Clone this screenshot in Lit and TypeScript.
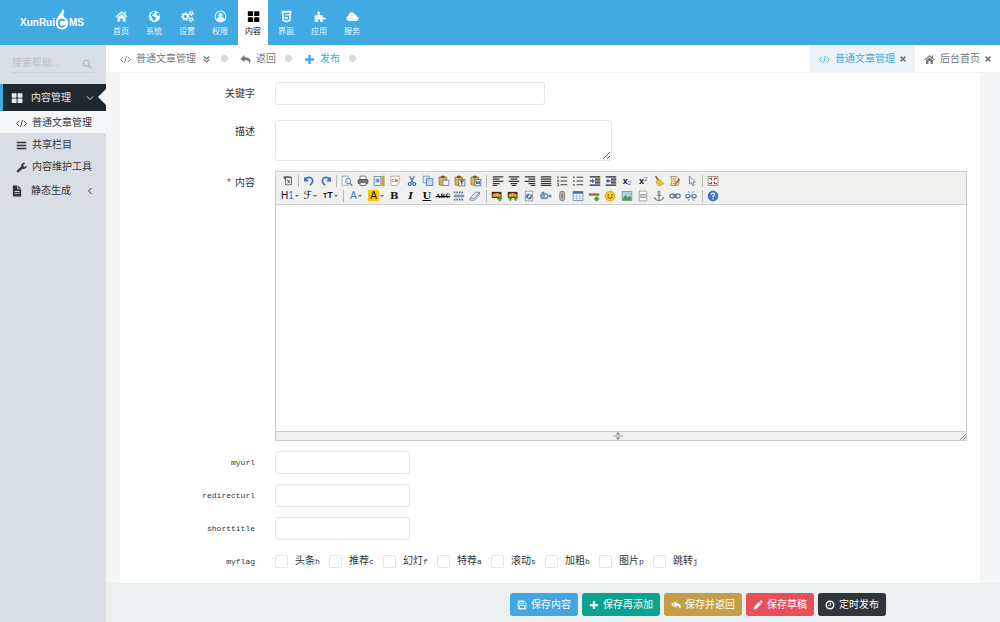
import { LitElement, html, svg, css, SVGTemplateResult } from "lit";
import { customElement, property, state } from "lit/decorators.js";
import { classMap } from "lit/directives/class-map.js";

const line = (d: string, color = "currentColor", w = 1.5) =>
  svg`<path d=${d} fill="none" stroke=${color} stroke-width=${w} />`;
const fill = (d: string, color = "currentColor") =>
  svg`<path d=${d} fill=${color} fill-rule="evenodd" />`;

const gear = (cx: number, cy: number, r: number, w: number, dash: string) => svg`
  <circle cx=${cx} cy=${cy} r=${r} fill="none" stroke="currentColor" stroke-width=${w} />
  <circle cx=${cx} cy=${cy} r=${r + w / 2 + 0.4} fill="none" stroke="currentColor" stroke-width="1.4" stroke-dasharray=${dash} />`;

const page = (x = 3, y = 1.5, w = 9, h = 12, stroke = "#8a93a0") =>
  svg`<rect x=${x} y=${y} width=${w} height=${h} fill="#fff" stroke=${stroke} />`;

const clipboard = svg`
  <rect x="1.5" y="2.5" width="10" height="11" rx="1" fill="#e3b341" stroke="#7d6a34" />
  <rect x="4" y="1" width="5" height="3" rx="1" fill="#5c5c50" />`;

const photo = svg`
  <rect x="1" y="2.5" width="13" height="8" fill="#3a2c14" />
  <path d="M2 6q6-4 11 0v3H2z" fill="#f0a41c" />`;

const icons: Record<string, SVGTemplateResult> = {
  home: fill("M8 1.5 0.5 8l1 1.1L8 3.6l6.5 5.5 1-1.1-2.3-2V2.3h-2v2zM3 9l5-4.2L13 9v5.5H9.6v-4H6.4v4H3z"),
  globe: svg`<circle cx="8" cy="8" r="7" fill="currentColor" />
    <path class="cut" d="M5.5 2.2 9 1.8l-.6 1.6-1.6.5.2 1.4-1.7.4-.3 1.6 1.8.2 1.6 1.4 1.6.6-.6 1.8-1.6 1.4-.8 1.3-.8-2.6-1.6-1.8-.2-1.8-1.6-1.6zM10.5 4l2.2-.6 1.5 2.6-.8 1.6-1.5-.4-1.3-1.3z" />`,
  cogs: svg`${gear(5.4, 8, 3, 2.4, "2.1 2")}${gear(12.6, 4, 1.6, 1.3, "1.5 1.4")}${gear(12.6, 12, 1.6, 1.3, "1.5 1.4")}`,
  user: svg`<circle cx="8" cy="8" r="6.6" fill="none" stroke="currentColor" stroke-width="1.3" />
    <circle cx="8" cy="6.3" r="2.7" fill="currentColor" /><path d="M3 12.2q.6-3.4 3-3.6 2 1.2 4 0 2.4.2 3 3.6Q8 16.5 3 12.2z" fill="currentColor" />`,
  grid: svg`<rect x="1" y="1.5" width="6.400" height="6" rx=".8" fill="currentColor" /><rect x="8.800" y="1.5" width="6.400" height="6" rx=".8" fill="currentColor" />
    <rect x="1" y="8.8" width="6.400" height="6" rx=".8" fill="currentColor" /><rect x="8.800" y="8.8" width="6.400" height="6" rx=".8" fill="currentColor" />`,
  html5: fill("M1.8 1h12.4L13 13.5 8 15.5 3 13.5zM4.3 3.5l.5 5h5l-.2 2.2-1.6.5-1.6-.5-.1-1H4.7l.2 2.3L8 13l3.100-1 .5-5.200H6.300l-.1-1.600h5.500l.1-1.700z"),
  puzzle: fill("M2 6.5h3.6q.6-.8-.1-1.8Q4.5 2 6.8 1.6 9.5 2 8.5 4.7q-.7 1 0 1.8H12v2.6q.9.7 1.6.1 2-.5 2.1 1.3-.3 1.9-2.1 1.3-.8-.7-1.6 0v3H8.7q-.4-.8.1-1.400.3-1.500-1.400-1.600-1.900.2-1.300 1.700.4.700 0 1.300H2z"),
  cloud: fill("M4 13.500Q.5 13.300.4 10.300.6 7.800 3 7.200 3.200 3 7.300 2.700q3 .1 4 3Q14 6 14 8.400q1.700.7 1.700 2.500-.3 2.500-3 2.600z"),
  code: line("M4.500 4 1 8l3.500 4M11.500 4 15 8l-3.500 4M9.300 3 6.700 13", "currentColor", 1.3),
  down2: line("M4 3.500 8 7l4-3.500M4 8l4 3.500L12 8", "currentColor", 2),
  back: fill("M6.500 1.500v3.200q7.500-.2 8.800 4.800.3 2.500-1.600 5 .4-5.700-7.200-5.600v3.300L.7 6.900z"),
  backAll: fill("M5.500 2v2L2.800 7l2.700 3v2.200L.4 7zM9 2v3q6 .4 6.500 5 0 2.500-1.600 4.500Q14.500 9.300 9 9v3.200L3.900 7z"),
  plus: fill("M6.200 1.500h3.600v4.700h4.700v3.600H9.800v4.700H6.200V9.800H1.500V6.200h4.700z"),
  close: fill("M4.300 2 8 5.700 11.700 2 14 4.300 10.300 8l3.700 3.700-2.300 2.300L8 10.300 4.300 14 2 11.700 5.700 8 2 4.300z"),
  search: svg`<circle cx="6.8" cy="6.8" r="4.8" fill="none" stroke="currentColor" stroke-width="1.8" />${line("M10.300 10.300 15 15", "currentColor", 2.2)}`,
  chevDown: line("M2 5l6 6 6-6", "currentColor", 2),
  chevLeft: line("M11 2 5 8l6 6", "currentColor", 2),
  bars: line("M1 3.500h14M1 8h14M1 12.500h14", "currentColor", 2.2),
  wrench: fill("M1.200 12.800 7.500 6.500Q7 2.500 11 1.200q1.500-.3 2.700.4L10.800 4v2l2 1.200L15.500 5q.3 4.500-4.500 5-.8.100-1.500-.2L3.500 15Q.5 15.500 1.200 12.800z"),
  file: fill("M2.500.8h6v5h5v9.500h-11zM9.700.8l3.800 3.700H9.700zM4.800 8v1.200h6.400V8zm0 2.600v1.200h6.400v-1.200z"),
  save: svg`<path d="M1.8 1.8h9.700l2.700 2.700v9.700H1.800z" fill="none" stroke="currentColor" stroke-width="1.5" /><path d="M4 2h6v4H4zM4 9h8v5H4z" fill="none" stroke="currentColor" stroke-width="1.4" />`,
  pencil: fill("M1 15l.8-4.200L9.500 3 13 6.500l-7.800 7.700zM10.500 2 12 .7q.8-.4 1.500.2L15.200 2.600q.5.800 0 1.500L14 5.400z"),
  clock: svg`<circle cx="8" cy="8" r="6" fill="none" stroke="currentColor" stroke-width="2.2" />${line("M8.500 4.500v4H5.500", "currentColor", 1.6)}`,

  source: svg`${page(4.5, 3, 8, 10, "#444")}${line("M2 2.500h8q2 0 1.500 2M3 3v2h2M6.500 6l4 5M10.500 6l-3 5", "#444", 1.3)}`,
  undo: line("M2.500 3v4.500H7M3 7q2-4.500 6.500-3.700 4.500 1.700 3 6.200-1 2.500-3.500 4", "#3b6fc4", 2.2),
  redo: line("M13.500 3v4.500H9M13 7q-2-4.500-6.500-3.700-4.500 1.700-3 6.200 1 2.500 3.500 4", "#3b6fc4", 2.2),
  preview: svg`${page(1.5, 1.5, 8, 12)}<circle cx="9.5" cy="8" r="3.5" fill="#dcebf8" stroke="#6d88a8" stroke-width="1.3" />${line("M12 11l3 3.500", "#8a7350", 2)}`,
  print: svg`<path d="M4 1.5h8V6H4z" fill="#fff" stroke="#555" /><rect x="1.5" y="6" width="13" height="5.5" rx="1" fill="#777" stroke="#444" /><path d="M4 10h8v4H4z" fill="#eee" stroke="#555" />`,
  template: svg`<rect x="1.5" y="2" width="9" height="12" fill="#e9f1fb" stroke="#55779f" /><path d="M3.5 5h5v5h-5z" fill="#6d9bd0" /><path d="M12 1.5h3v13h-3z" fill="#dfa62f" stroke="#9a7423" stroke-width=".6" />`,
  codeDoc: svg`<path d="M2.5 1.5h11v9l-3 3.5h-8z" fill="#fff" stroke="#999" />${line("M7 5.500Q4 5 4 7.500 4.300 9.500 7 9M9 5v4.500M8 7.500h4M11 5.500v4", "#c4762c", 1.3)}`,
  cut: svg`${line("M5 1.500 9.500 10M11 1.500 6.500 10", "#4571b8", 1.6)}<circle cx="5" cy="12" r="2" fill="none" stroke="#2e5ca8" stroke-width="1.6" /><circle cx="11" cy="12" r="2" fill="none" stroke="#2e5ca8" stroke-width="1.6" />`,
  copy: svg`<rect x="1.5" y="1.5" width="8" height="9" fill="#dce9fa" stroke="#6288bd" /><rect x="6" y="5" width="8.5" height="9" fill="#c1d8f5" stroke="#4772b0" />`,
  paste: svg`${clipboard}<rect x="6.5" y="7" width="8" height="7" fill="#fff" stroke="#5475a3" />`,
  pasteText: svg`${clipboard}<rect x="6.5" y="6" width="8" height="8.5" fill="#fff" stroke="#54606f" />${line("M8 8h5M10.500 8v5", "#222", 1.4)}`,
  pasteWord: svg`${clipboard}<rect x="6.5" y="6" width="8" height="8.5" fill="#dbe8fb" stroke="#3a66b0" />${line("M8 8l1 4 1.500-3L12 12l1-4", "#2858ad", 1.3)}`,
  left: line("M1 2.500h14M1 5.500h9M1 8.500h14M1 11.500h9M1 14h6", "#333", 1.5),
  center: line("M1 2.500h14M3.500 5.500h9M1 8.500h14M3.500 11.500h9M5 14h6", "#333", 1.5),
  right: line("M1 2.500h14M6 5.500h9M1 8.500h14M6 11.500h9M9 14h6", "#333", 1.5),
  full: line("M1 2.500h14M1 5.500h14M1 8.500h14M1 11.500h14M1 14h14", "#333", 1.5),
  ol: svg`${line("M6 3h9M6 8h9M6 13h9", "#444", 1.4)}${line("M2.500 1v4M1.500 7h2v2h-2M1.500 11.500h2v3h-2", "#444", 1.1)}`,
  ul: svg`${line("M6 3h9M6 8h9M6 13h9", "#444", 1.4)}${line("M1.500 3h2M1.500 8h2M1.500 13h2", "#444", 2)}`,
  indent: svg`${line("M1 2.500h14M8 5.500h7M8 8h7M8 10.500h7M1 13.500h14", "#222", 1.5)}${fill("M1 7h3V5l3.500 3L4 11V9H1z", "#2c5cb0")}`,
  outdent: svg`${line("M1 2.500h14M8 5.500h7M8 8h7M8 10.500h7M1 13.500h14", "#222", 1.5)}${fill("M7.500 7h-3V5L1 8l3.500 3V9h3z", "#2c5cb0")}`,
  broom: svg`${line("M3.500 1.500 7 7", "#b3541c", 2.2)}<path d="M4.5 8 9 6l5.5 5.5L8 14.500q-3.500-2-3.500-6.500z" fill="#f2c230" stroke="#b78913" stroke-width=".8" />`,
  format: svg`<path d="M2 2h8l4 5-2 7H2l2-6z" fill="#f7e9b5" stroke="#9a7c44" />${line("M5 5h4M6 8h4M5 11h4", "#777", 1)}${line("M14 5 8 13", "#bb6a2f", 2)}`,
  select: svg`<path d="M4.5 1.5v10.500l2.500-2.200L9 14l1.800-.8L9 9.300h3.500z" fill="#fff" stroke="#58799f" stroke-width="1.2" />`,
  fullscreen: svg`<rect x="1.5" y="2" width="13" height="12" fill="#fff" stroke="#777" />${line("M3 4.500h3v2.500M13 4.500h-3v2.500M3 11.500h3V9M13 11.500h-3V9", "#c22f2f", 1.6)}`,
  lineHeight: svg`${line("M1 8h14", "#333", 1.3)}${line("M1 3h2M4.500 3h2M8 3h2M11.500 3h2", "#41618f", 2)}${line("M1 13h2M4.500 13h2M8 13h2M11.500 13h2", "#41618f", 2)}${line("M4 4v2.500M8 4v2.500M12 4v2.500M4 9.500v2.500M8 9.500v2.500M12 9.500v2.500", "#41618f", 1)}`,
  eraser: svg`<path d="M1.5 11 8.500 3h5.500l-6.500 8zM1.500 11v2.500h6L14 6V3" fill="#f4f7fb" stroke="#6780a5" stroke-width="1.2" />`,
  image: svg`${photo}${fill("M8 10.500h2.500V8.500H13v2h2v2h-2v2.500h-2.500v-2.500H8z", "#3f9a35")}`,
  images: svg`${photo}${fill("M2 11h1.600V9.500h1.800V11H7v1.800H5.400v1.700H3.600v-1.700H2zM9 11h1.600V9.500h1.800V11H14v1.800h-1.600v1.700h-1.800v-1.700H9z", "#3f9a35")}`,
  flash: svg`${page(3, 1.5, 10, 13, "#77808d")}<circle cx="8" cy="8.5" r="4" fill="#49709b" />${line("M10.500 5.500q-2.500 0-2.500 3-.5 3-2.500 3M7 8.500h3", "#fff", 1.2)}`,
  media: svg`<rect x="1" y="5" width="9" height="6.500" rx="1.5" fill="#8fa9c7" stroke="#4b6787" /><path d="M10 8l5-2.500v5z" fill="#62809f" /><circle cx="4" cy="4" r="2" fill="#6e8bac" /><circle cx="8" cy="8" r="1.5" fill="#fff" />`,
  attach: svg`<rect x="5" y="1.5" width="6.500" height="13" rx="3.200" fill="#bbb" stroke="#777" stroke-width="1.2" />${line("M8.200 4.500v7", "#666", 1.4)}`,
  table: svg`<rect x="1.5" y="2" width="13" height="12" fill="#fff" stroke="#4a78ba" /><path d="M1.5 2h13v3h-13z" fill="#3d6db5" />${line("M1.500 8h13M1.500 11h13M6 5v9M10.500 5v9", "#9db8dc", 1)}`,
  hr: svg`<path d="M1 4.500h14v3H1z" fill="#8b6c43" /><path d="M8 10.500h2V8.500h3v2h2v2h-2v2.500h-3v-2.500H8z" fill="#3f9a35" />`,
  smile: svg`<circle cx="8" cy="8" r="6.500" fill="#ffc928" stroke="#d99a15" /><circle cx="5.7" cy="6.5" r="1" fill="#5d3a0a" /><circle cx="10.300" cy="6.500" r="1" fill="#5d3a0a" />${line("M4.500 9.500q3.500 3.500 7 0", "#5d3a0a", 1.2)}`,
  map: svg`<rect x="1.5" y="2" width="13" height="12" fill="#a8d3ef" stroke="#808f80" /><path d="M2 11l4-4 3 3 2.500-2 2.500 2v3.500H2z" fill="#4f9b47" />`,
  pagebreak: svg`<path d="M3 1.500h10V6H3zM3 10h10v4.500H3z" fill="#fff" stroke="#888" />${line("M1 8h14", "#999", 1.2)}`,
  anchor: svg`<circle cx="8" cy="3" r="1.6" fill="none" stroke="#6a7684" stroke-width="1.3" />${line("M8 4.500v9.500M5 7h6M2 9.500q1 4.500 6 4.500t6-4.500", "#6a7684", 1.5)}`,
  link: svg`<rect x="1" y="5.5" width="7" height="5" rx="2.5" fill="none" stroke="#54708f" stroke-width="1.6" /><rect x="8" y="5.5" width="7" height="5" rx="2.5" fill="none" stroke="#54708f" stroke-width="1.6" />${line("M5 8h6", "#54708f", 1.5)}`,
  unlink: svg`<rect x="1" y="6" width="5.500" height="4.500" rx="2.200" fill="none" stroke="#54708f" stroke-width="1.5" /><rect x="9.500" y="6" width="5.500" height="4.500" rx="2.200" fill="none" stroke="#54708f" stroke-width="1.5" />${line("M4 1.500 6 4M12 1.500 10 4M4 14.500 6 12M12 14.500 10 12M8 6v4", "#54708f", 1.2)}`,
  help: svg`<circle cx="8" cy="8" r="6.500" fill="#3e78d2" stroke="#2b569e" />${line("M5.700 6Q6 4 8 4q2.400.3 2.200 2.200Q9.700 7.600 8 8.200V9.700M8 11v1.600", "#fff", 1.6)}`,
};

const icon = (name: string) => html`<svg class="icon" viewBox="0 0 16 16" aria-hidden="true">${icons[name]}</svg>`;

const NAV = [
  ["home", "首页"], ["globe", "系统"], ["cogs", "设置"], ["user", "权限"],
  ["grid", "内容"], ["html5", "界面"], ["puzzle", "应用"], ["cloud", "服务"],
];

const TOOLS_TOP = [
  "source", "|", "undo", "redo", "|", "preview", "print", "template", "codeDoc", "cut", "copy", "paste",
  "pasteText", "pasteWord", "|", "left", "center", "right", "full", "ol", "ul", "indent", "outdent",
  "sub", "sup", "broom", "format", "select", "|", "fullscreen",
];
const TOOLS_BOTTOM = [
  "heading", "fontFamily", "fontSize", "|", "color", "highlight", "bold", "italic", "underline", "strike",
  "lineHeight", "eraser", "|", "image", "images", "flash", "media", "attach", "table", "hr", "smile",
  "map", "pagebreak", "anchor", "link", "unlink", "|", "help",
];
const GLYPHS: Record<string, unknown> = {
  heading: html`<span class="h">H<b class="blue">1</b></span>`,
  fontFamily: html`<span class="script">ℱ</span>`,
  fontSize: html`<span class="tt"><small>T</small>T</span>`,
  color: html`<span class="h blue">A</span>`,
  highlight: html`<span class="h mark">A</span>`,
  bold: html`<b class="serif">B</b>`,
  italic: html`<b class="serif it">I</b>`,
  underline: html`<b class="serif un">U</b>`,
  strike: html`<s class="abc">ABC</s>`,
  sub: html`<span class="x low">x<i>2</i></span>`,
  sup: html`<span class="x">x<i>2</i></span>`,
};
const MENUS = new Set(["heading", "fontFamily", "fontSize", "color", "highlight"]);

const FLAGS = [
  ["头条", "h"], ["推荐", "c"], ["幻灯", "f"], ["特荐", "a"],
  ["滚动", "s"], ["加粗", "b"], ["图片", "p"], ["跳转", "j"],
];

const base = css`
  :host { display: block; }
  * { box-sizing: border-box; }
  a { color: inherit; text-decoration: none; }
  button { font: inherit; color: inherit; border: 0; background: none; padding: 0; cursor: pointer; }
  .icon { display: block; flex: none; width: 12px; height: 12px; }
`;

@customElement("rich-editor")
export class RichEditor extends LitElement {
  static styles = [base, css`
    .editor { border: 1px solid #ccc; background: #fff; }
    .bar { background: #f0f0ee; border-bottom: 1px solid #ccc; padding: 1px 5px; }
    .row { display: flex; align-items: center; justify-content: space-between; height: 15px; max-width: 439px; }
    .tool { flex: none; width: 14px; height: 14px; display: flex; align-items: center; justify-content: center; color: #111; font: 10px/14px "Liberation Sans", sans-serif; }
    .menu { width: 18px; }
    .caret { border: 2px solid transparent; border-top-color: #666; border-bottom: 0; margin-left: 1px; flex: none; }
    .sep { flex: none; width: 1px; height: 12px; margin: 0 1px; background: #b5b5b5; }
    .blue { color: #3b7ad8; font-weight: 400; }
    .mark { background: #ffc400; width: 11px; line-height: 11px; border-radius: 1px; }
    .script { font: 11px/14px "DejaVu Serif", "DejaVu Sans", serif; }
    .tt { font: bold 9px/14px "Liberation Sans", sans-serif; }
    .tt small { font-size: 7px; }
    .serif { font: bold 10px/11px "DejaVu Serif", serif; }
    .it { font-style: italic; }
    .un { text-decoration: underline; }
    .abc { font: bold 6px/10px "DejaVu Serif", serif; }
    .x { display: flex; align-items: flex-start; font: bold 9px/10px "Liberation Sans", sans-serif; }
    .x i { font: 6px/6px "Liberation Sans", sans-serif; color: #2c5cb0; }
    .low { align-items: flex-end; }
    .body { min-height: 226px; outline: none; }
    .status { display: flex; align-items: center; height: 9px; border-top: 1px solid #ccc; background: #f0f0ee; }
    .grip { flex: none; width: 10px; height: 8px; margin-left: auto; }
    .corner { flex: none; width: 7px; height: 7px; margin-left: auto; }
  `];

  private tool(name: string) {
    if (name === "|") return html`<span class="sep"></span>`;
    return html`<button type="button" class=${classMap({ tool: true, menu: MENUS.has(name) })} aria-label=${name}>
      ${GLYPHS[name] ?? icon(name)}${MENUS.has(name) ? html`<i class="caret"></i>` : ""}
    </button>`;
  }

  render() {
    return html`<div class="editor">
      <div class="bar" role="toolbar">
        <div class="row">${TOOLS_TOP.map((t) => this.tool(t))}</div>
        <div class="row">${TOOLS_BOTTOM.map((t) => this.tool(t))}</div>
      </div>
      <div class="body" contenteditable="true" role="textbox" aria-multiline="true" aria-label="内容"></div>
      <div class="status">
        <svg class="grip" viewBox="0 0 10 8"><path d="M0 4h10" stroke="#999" /><path d="M5 0l2 2.500H3zM5 8l2-2.500H3z" fill="#777" /></svg>
        <svg class="corner" viewBox="0 0 7 7"><path d="M1 7l6-6M4 7l3-3" stroke="#888" /></svg>
      </div>
    </div>`;
  }
}

@customElement("form-row")
export class FormRow extends LitElement {
  @property() name = "";
  static styles = [base, css`
    .row { display: grid; grid-template-columns: 135px minmax(0, 1fr); column-gap: 20px; }
    .name { text-align: right; padding-top: 1px; line-height: 22px; }
    ::slotted([slot="label"]) { display: block; }
  `];
  render() {
    return html`<div class="row"><div class="name"><slot name="label"></slot></div><div><slot></slot></div></div>`;
  }
}

@customElement("app-root")
export class AppRoot extends LitElement {
  @state() private flags = new Set<string>();

  static styles = [base, css`
    :host { font: 10px/14px "Liberation Sans", "Noto Sans CJK SC", sans-serif; color: #333; }
    .app { display: flex; flex-direction: column; min-height: 100vh; background: #f4f5f7; }

    .top { display: flex; height: 45px; background: #41aae3; color: #fff; }
    .logo { flex: none; width: 106px; padding-left: 20px; display: flex; align-items: center; font: bold 10px/14px "Liberation Sans", sans-serif; }
    .flame { flex: none; width: 14px; height: 21px; margin-top: -6px; }
    .nav { display: flex; gap: 3px; }
    .nav a { width: 30px; padding-top: 10px; display: flex; flex-direction: column; align-items: center; gap: 3px; font-size: 8px; line-height: 12px; color: #e9f6fd; }
    .nav .icon { width: 13px; height: 13px; }
    .nav .on { background: #fff; color: #000; }
    .cut { fill: #41aae3; }

    .mid { flex: 1; display: flex; }
    .side { flex: none; width: 106px; background: #d9dee5; }
    .search { display: flex; align-items: center; height: 28px; margin: 0 11px 11px 12px; border-bottom: 1px solid #cbd1d8; color: #b4bac2; }
    .search input { flex: 1; min-width: 0; border: 0; background: none; outline: none; padding: 8px 0 0; font: inherit; }
    .search input::placeholder { color: #bcc2c9; opacity: 1; }
    .search button { padding: 10px 3px 0 0; }
    .search .icon { width: 10px; height: 10px; }
    .item { display: flex; align-items: center; height: 26px; padding: 2px 0 0 11px; }
    .item .icon { width: 12px; height: 12px; margin-right: 8px; }
    .item .arrow { width: 8px; height: 8px; margin: 0 12px 0 auto; }
    .open { position: relative; height: 27px; background: #21282e; color: #e8ebee; border-left: 3px solid #41aae3; padding: 0 0 0 8px; }
    .open::after { content: ""; position: absolute; right: 0; top: 5px; border: 8px solid transparent; border-left-width: 0; border-right-color: #f4f5f7; }
    .sub { display: flex; align-items: center; height: 22px; padding: 2px 0 0 16px; }
    .sub .icon { width: 11px; height: 11px; margin-right: 5px; }
    .sub.on { background: #f6f7f9; }

    .main { flex: 1; min-width: 0; display: flex; flex-direction: column; }
    .crumbs { display: flex; align-items: center; height: 28px; padding-left: 14px; background: #fff; border-bottom: 1px solid #eff1f3; color: #777; }
    .crumbs a, .crumbs button { display: flex; align-items: center; gap: 5px; padding-top: 1px; }
    .crumbs .icon { width: 11px; height: 11px; }
    .crumbs .x .icon { width: 8px; height: 8px; }
    .dot { flex: none; width: 7px; height: 7px; border-radius: 50%; background: #dadada; margin: 0 12px 0 9px; }
    .accent { color: #41aae3; }
    .tabs { display: flex; align-self: stretch; margin-left: auto; }
    .tab { display: flex; align-items: center; gap: 4px; padding: 0 8px 0 9px; }
    .tab.on { background: #edf2f6; }
    .tab .x { color: #777; }

    .form { margin: 0 20px 0 14px; padding: 9px 13px 10px 0; background: #fff; display: flex; flex-direction: column; gap: 10px; }
    .keywords { margin-bottom: 5px; }
    .text { display: block; width: 100%; height: 23px; border: 1px solid #e4e6e9; border-radius: 3px; background: #fff; font: inherit; padding: 0 6px; }
    .w1 { max-width: 270px; }
    .w2 { max-width: 337px; height: 41px; resize: both; }
    .w3 { max-width: 135px; }
    .mono, .code { font-family: "Liberation Mono", monospace; font-size: 8px; }
    .need { color: #e02222; margin-right: 4px; }
    .flags { display: flex; flex-wrap: wrap; height: 23px; align-items: center; }
    .flag { display: flex; align-items: center; width: 54px; white-space: nowrap; }
    .flag input { appearance: none; flex: none; width: 13px; height: 13px; margin: 0 7px 0 0; border: 1px solid #e2e4e7; border-radius: 2px; background: #fff; }
    .flag input:checked { background: #41aae3; }

    .foot { display: flex; justify-content: flex-end; gap: 4px; margin-top: auto; padding: 10px 114px 6px 14px; background: #ebefef; }
    .btn { display: flex; align-items: center; gap: 4px; height: 23px; padding: 0 7px; border-radius: 3px; color: #fff; white-space: nowrap; }
    .btn .icon { width: 10px; height: 10px; }
    .b1 { background: #41a6e1; }
    .b2 { background: #0aa38f; }
    .b3 { background: #c49f47; }
    .b4 { background: #e7505a; }
    .b5 { background: #2f353b; }
  `];

  private toggle(code: string) {
    const next = new Set(this.flags);
    next.has(code) ? next.delete(code) : next.add(code);
    this.flags = next;
  }

  render() {
    return html`<div class="app">
      <header class="top">
        <a class="logo" href="#">XunRui<svg class="flame" viewBox="0 0 14 22" aria-label="C">
          <path d="M7.500 0Q7 3 4.500 6 .5 10 .5 15q.5 6 6.500 6.500 6-.5 6.500-6.500 0-4-3.500-6Q7 7 9.500 3 9 1 7.500 0z" fill="#fff" />
          <path d="M9.800 12.800Q8.800 11 7 11q-3.200.3-3.400 3.800.2 3.600 3.400 3.900 2-.1 2.900-2.100" fill="none" stroke="#41aae3" stroke-width="1.9" />
        </svg>MS</a>
        <nav class="nav">
          ${NAV.map(([i, t]) => html`<a href="#" class=${classMap({ on: t === "内容" })}>${icon(i)}<span>${t}</span></a>`)}
        </nav>
      </header>
      <div class="mid">
        <aside class="side">
          <div class="search"><input type="text" placeholder="搜索帮助..." aria-label="搜索帮助" /><button type="button" aria-label="搜索">${icon("search")}</button></div>
          <a class="item open" href="#">${icon("grid")}内容管理<svg class="icon arrow" viewBox="0 0 16 16">${icons.chevDown}</svg></a>
          <a class="sub on" href="#">${icon("code")}普通文章管理</a>
          <a class="sub" href="#">${icon("bars")}共享栏目</a>
          <a class="sub" href="#">${icon("wrench")}内容维护工具</a>
          <a class="item" href="#">${icon("file")}静态生成<svg class="icon arrow" viewBox="0 0 16 16">${icons.chevLeft}</svg></a>
        </aside>
        <div class="main">
          <div class="crumbs">
            <a href="#">${icon("code")}普通文章管理 ${icon("down2")}</a><i class="dot"></i>
            <a href="#">${icon("back")}返回</a><i class="dot"></i>
            <a class="accent" href="#">${icon("plus")}发布</a><i class="dot"></i>
            <div class="tabs">
              <div class="tab on"><a class="accent" href="#">${icon("code")}普通文章管理</a><button type="button" class="x" aria-label="关闭">${icon("close")}</button></div>
              <div class="tab"><a href="#">${icon("home")}后台首页</a><button type="button" class="x" aria-label="关闭">${icon("close")}</button></div>
            </div>
          </div>
          <form class="form">
            <form-row class="keywords"><label slot="label" for="keywords">关键字</label><input id="keywords" class="text w1" type="text" /></form-row>
            <form-row><label slot="label" for="desc">描述</label><textarea id="desc" class="text w2"></textarea></form-row>
            <form-row><label slot="label"><span class="need">*</span>内容</label><rich-editor></rich-editor></form-row>
            ${["myurl", "redirecturl", "shorttitle"].map((n) => html`
              <form-row><label slot="label" class="mono" for=${n}>${n}</label><input id=${n} class="text w3" type="text" /></form-row>`)}
            <form-row><span slot="label" class="mono">myflag</span>
              <div class="flags">${FLAGS.map(([t, c]) => html`
                <label class="flag"><input type="checkbox" .checked=${this.flags.has(c)} @change=${() => this.toggle(c)} /><span>${t}<span class="code">${c}</span></span></label>`)}
              </div>
            </form-row>
          </form>
          <footer class="foot">
            <button type="button" class="btn b1">${icon("save")}保存内容</button>
            <button type="button" class="btn b2">${icon("plus")}保存再添加</button>
            <button type="button" class="btn b3">${icon("backAll")}保存并返回</button>
            <button type="button" class="btn b4">${icon("pencil")}保存草稿</button>
            <button type="button" class="btn b5">${icon("clock")}定时发布</button>
          </footer>
        </div>
      </div>
    </div>`;
  }
}
